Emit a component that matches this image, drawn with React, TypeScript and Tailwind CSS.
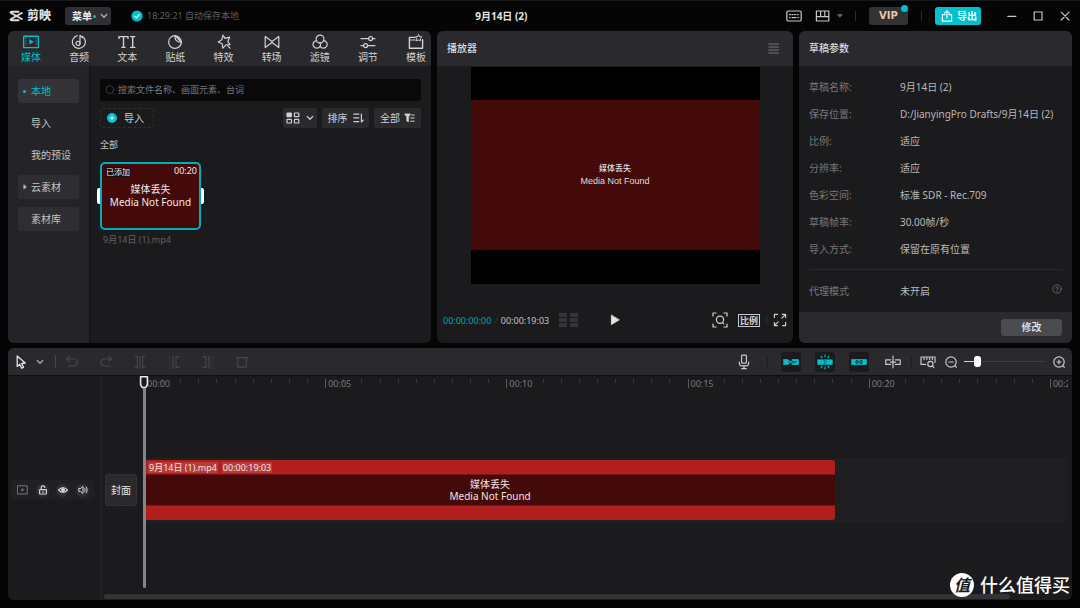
import React, { useState } from 'react';

type IconProps = {
  w?: number;
  h?: number;
  className?: string;
  children: React.ReactNode;
};

function Icon({ w = 16, h = 16, className = '', children }: IconProps) {
  return (
    <svg
      width={w}
      height={h}
      viewBox={`0 0 ${w} ${h}`}
      fill="none"
      stroke="currentColor"
      strokeWidth="1.2"
      strokeLinecap="round"
      strokeLinejoin="round"
      aria-hidden="true"
      className={`shrink-0 ${className}`}
    >
      {children}
    </svg>
  );
}

const tabs: { label: string; icon: React.ReactNode }[] = [
  {
    label: '媒体',
    icon: (
      <Icon>
        <rect x="0.6" y="2.2" width="14.8" height="11.4" rx="0.6" strokeWidth="1.4" />
        <path d="M2.9 4v8M13.1 4v8" strokeWidth="0.8" strokeDasharray="0.8 2" />
        <path d="M6.6 5.8v4.2l3.6-2.1z" fill="currentColor" strokeWidth="0.6" />
      </Icon>
    ),
  },
  {
    label: '音频',
    icon: (
      <Icon>
        <path d="M6.3 1.6A6.5 6.5 0 1 0 11 2.2" />
        <circle cx="7" cy="9.4" r="2" />
        <path d="M9 9.4V1.4l2.8 2.4" />
      </Icon>
    ),
  },
  {
    label: '文本',
    icon: (
      <Icon w={18}>
        <path d="M1 4.4V2.6h9v1.8M5.5 2.6v10.8M4 13.4h3" strokeWidth="1.4" />
        <path d="M12.6 2.6h4.2M14.7 2.6v10.8M12.6 13.4h4.2" strokeWidth="1.4" />
      </Icon>
    ),
  },
  {
    label: '贴纸',
    icon: (
      <Icon>
        <path d="M8.2 1.6a6.4 6.4 0 1 0 6.2 6.8z" />
        <path d="M8.2 1.6c-.6 4 1 6.6 6.2 6.8a7 7 0 0 0-6.2-6.8z" />
        <path d="M10 3.2l3 3.2" />
      </Icon>
    ),
  },
  {
    label: '特效',
    icon: (
      <Icon>
        <path d="M7 1.2l2 3.2 4.6-1.2-1.8 4.2 2.2 3.2-4 .2-3.2 3.4-.6-4.4-4-1.8 3.6-2.2z" />
        <path d="M11.8 11.8l2.2 2.4" />
      </Icon>
    ),
  },
  {
    label: '转场',
    icon: (
      <Icon>
        <path d="M1.2 2.4v11.2L8 8.6 14.8 13.6V2.4L8 7.4z" />
      </Icon>
    ),
  },
  {
    label: '滤镜',
    icon: (
      <Icon>
        <circle cx="8" cy="5" r="3.9" />
        <path d="M4.6 6.6a3.8 3.8 0 1 0 3.5 5.8c.5-1 .5-2.4-.2-3.5" />
        <path d="M11.4 6.6a3.8 3.8 0 1 1-3.3 5.8" />
      </Icon>
    ),
  },
  {
    label: '调节',
    icon: (
      <Icon>
        <path d="M1 4.6h7.6M12.6 4.6H15M1 11.6h2.6M7.6 11.6H15" />
        <circle cx="10.6" cy="4.6" r="2" />
        <circle cx="5.6" cy="11.6" r="2" />
      </Icon>
    ),
  },
  {
    label: '模板',
    icon: (
      <Icon>
        <path d="M6.6 3.4H1.4v10.8h13.2V5.8" strokeWidth="1.4" />
        <path d="M1.4 6h6" />
        <path d="M10.6.8l1 1.8 2.2.2-1.4 1.8.4 2.2-2.2-.8-2.2.8.4-2.2-1.4-1.8 2.2-.2z" strokeWidth="1" />
      </Icon>
    ),
  },
];

const sideItems = [
  { label: '本地', style: 'bg-[#333338] text-[#00c1cd]', mark: 'dot' },
  { label: '导入', style: 'text-[#c4c4c6]', mark: '' },
  { label: '我的预设', style: 'text-[#c4c4c6]', mark: '' },
  { label: '云素材', style: 'bg-[#2e2e32] text-[#c4c4c6]', mark: 'arrow' },
  { label: '素材库', style: 'bg-[#2e2e32] text-[#c4c4c6]', mark: '' },
];

const params = [
  ['草稿名称:', '9月14日 (2)'],
  ['保存位置:', 'D:/JianyingPro Drafts/9月14日 (2)'],
  ['比例:', '适应'],
  ['分辨率:', '适应'],
  ['色彩空间:', '标准 SDR - Rec.709'],
  ['草稿帧率:', '30.00帧/秒'],
  ['导入方式:', '保留在原有位置'],
];

const marks = ['00:00', '00:05', '00:10', '00:15', '00:20'];

function Chevron({ className = '' }: { className?: string }) {
  return (
    <Icon w={8} h={6} className={className}>
      <path d="M1.2 1.4L4 4.2l2.8-2.8" strokeWidth="1.3" />
    </Icon>
  );
}

function TitleBar() {
  return (
    <header className="grid h-[30px] grid-cols-[43fr_auto_50fr] items-center">
      <div className="flex min-w-0 items-center pl-[9px]">
        <Icon w={14} h={12} className="text-[#dedede]">
          <path d="M9.6 1.8H2.8Q1 1.8 2 3L12.8 9" strokeWidth="1.9" />
          <path d="M9.6 10.2H2.8Q1 10.2 2 9L12.8 3" strokeWidth="1.9" />
        </Icon>
        <span className="ml-1 text-[12px] leading-4 font-black text-[#dedede]">剪映</span>
        <button className="ml-[14px] flex h-[18px] w-[46px] items-center rounded-[3px] bg-[#2f2f34] pl-[7px] text-[10px] font-bold text-[#ececec]">
          菜单
          <span className="ml-px size-[3px] rounded-full bg-[#00c1cd]" />
          <Chevron className="ml-1 text-[#b8b8ba]" />
        </button>
        <Icon w={12} h={12} className="ml-5 text-white">
          <circle cx="6" cy="6" r="5.6" fill="#00c1cd" stroke="none" />
          <path d="M3.6 6.1l1.8 1.7 3-3.4" />
        </Icon>
        <span className="ml-1 text-[9px] whitespace-nowrap text-[#5c5c60]">18:29:21 自动保存本地</span>
      </div>

      <h1 className="text-[10px] font-bold whitespace-nowrap text-[#e4e4e4]">9月14日 (2)</h1>

      <div className="flex items-center justify-end pr-[10px] text-[#c8c8ca]">
        <button aria-label="快捷键">
          <Icon w={16} h={12}>
            <rect x="0.8" y="1" width="14.4" height="10" rx="1.6" />
            <path d="M3.6 4.6h1M6 4.6h1M8.6 4.6h1M11.2 4.6h1M3.6 7.6h.6M6 7.6h4M11.8 7.6h.6" />
          </Icon>
        </button>
        <button aria-label="布局" className="ml-[13px] flex items-center gap-1.5">
          <Icon w={16} h={12}>
            <path d="M1.4 1h12.4v10H1.4zM1.4 6.6h12.4M5.6 1v5.6M9.8 1v5.6" />
          </Icon>
          <Icon w={6} h={4} className="text-[#6a6a6e]">
            <path d="M.6.6h4.8L3 3.2z" fill="currentColor" strokeWidth="0.6" />
          </Icon>
        </button>
        <span className="ml-3 h-[10px] w-px bg-[#2c2c30]" />
        <button className="relative ml-[13px] h-[18px] w-[39px] rounded-[3px] bg-[#323237] font-['DejaVu_Sans',sans-serif] text-[10px] leading-[18px] font-bold text-[#edc6a4]">
          VIP
          <span className="absolute -top-0.5 right-0 size-[7px] rounded-full bg-[#00c1cd]" />
        </button>
        <span className="ml-[13px] h-[10px] w-px bg-[#2c2c30]" />
        <button className="ml-[13px] flex h-[18px] w-[46px] items-center gap-1 rounded-[3px] bg-[#00c1cd] pl-1.5 text-[10px] font-bold text-white">
          <Icon w={12} h={12}>
            <path d="M4 4.6H1.4v6.6h9.2V4.6H8M6 8V1.2M3.8 3L6 1l2.2 2" />
          </Icon>
          导出
        </button>
        <button aria-label="最小化" className="ml-[26px]">
          <Icon w={10} h={10}>
            <path d="M.8 5.4h8" />
          </Icon>
        </button>
        <button aria-label="最大化" className="ml-4">
          <Icon w={10} h={10}>
            <path d="M1.2 1h7.8v8H1.2z" />
          </Icon>
        </button>
        <button aria-label="关闭" className="ml-[17px]">
          <Icon w={10} h={10}>
            <path d="M1.2 1.2l7.8 7.8M9 1.2L1.2 9" />
          </Icon>
        </button>
      </div>
    </header>
  );
}

function MediaPanel() {
  return (
    <section className="flex min-w-0 flex-col overflow-hidden rounded-md bg-[#1b1b1d]">
      <nav className="flex h-[35px] justify-between bg-[#29292e] pr-[3px] pl-[11px]">
        {tabs.map((t, i) => (
          <button
            key={t.label}
            className={`flex w-6 flex-col items-center pt-[3px] text-[10px] leading-[14px] whitespace-nowrap ${
              i === 0 ? 'text-[#00c1cd]' : 'text-[#d2d2d4]'
            }`}
          >
            {t.icon}
            {t.label}
          </button>
        ))}
      </nav>
      <div className="flex flex-1">
        <aside className="flex w-[82px] flex-col gap-2 border-r border-[#141416] bg-[#242428] px-[10px] pt-[13px]">
          {sideItems.map((s) => (
            <button
              key={s.label}
              className={`flex h-6 items-center rounded-[3px] text-[10px] whitespace-nowrap ${s.style}`}
            >
              <span className="flex w-[13px] shrink-0 items-center justify-center">
                {s.mark === 'dot' && <span className="size-[3px] rounded-full bg-[#00c1cd]" />}
                {s.mark === 'arrow' && (
                  <Icon w={4} h={6}>
                    <path d="M.8 1v4l2.4-2z" fill="currentColor" strokeWidth="0.6" />
                  </Icon>
                )}
              </span>
              {s.label}
            </button>
          ))}
        </aside>
        <div className="min-w-0 flex-1 pt-[13px] pr-[10px] pl-[10px]">
          <label className="flex h-[22px] items-center gap-[3px] rounded-[3px] bg-[#09090a] pl-[5px]">
            <Icon w={10} h={10} className="text-[#3e3e42]">
              <circle cx="4.8" cy="4.6" r="3.8" strokeWidth="1" />
              <path d="M7.6 7.6l1.4 1.4" strokeWidth="1" />
            </Icon>
            <input
              type="text"
              aria-label="搜索"
              placeholder="搜索文件名称、画面元素、台词"
              className="min-w-0 flex-1 bg-transparent text-[9px] outline-none placeholder:text-[#77777b]"
            />
          </label>
          <div className="mt-[7px] flex h-5 items-center gap-[5px] text-[10px] text-[#d0d0d2]">
            <button className="mr-auto flex h-5 w-[54px] items-center rounded-[3px] border border-dashed border-[#2f2f32] pl-1.5">
              <Icon w={10} h={10} className="mr-[7px] text-white">
                <circle cx="5" cy="5" r="5" fill="#00c1cd" stroke="none" />
                <path d="M5 3v4M3 5h4" strokeWidth="1" />
              </Icon>
              导入
            </button>
            <button
              aria-label="视图"
              className="flex h-5 w-[34px] items-center justify-center gap-1.5 rounded-[3px] bg-[#2a2a2d]"
            >
              <Icon w={14} h={12}>
                <rect x="1" y="1" width="4.4" height="3.6" rx="0.6" fill="currentColor" />
                <rect x="8.4" y="1" width="4.4" height="3.6" rx="0.6" />
                <rect x="1" y="7.4" width="4.4" height="3.6" rx="0.6" />
                <rect x="8.4" y="7.4" width="4.4" height="3.6" rx="0.6" />
              </Icon>
              <Chevron />
            </button>
            <button className="flex h-5 w-[47px] items-center justify-center gap-[5px] rounded-[3px] bg-[#2a2a2d]">
              排序
              <Icon w={11} h={10}>
                <path d="M.8 1.2h5M.8 4.8h5M.8 8.6h5M8.4 1v8l1.8-1.8" />
              </Icon>
            </button>
            <button className="flex h-5 w-[47px] items-center justify-center gap-1 rounded-[3px] bg-[#2a2a2d]">
              全部
              <Icon w={11} h={10}>
                <path d="M.8 1h5.6L4.4 4v4.8L2.8 8V4z" fill="currentColor" strokeWidth="0.8" />
                <path d="M7.6 2h2.6M6.6 5h3.6M6.6 8.2h3.6" strokeWidth="1" />
              </Icon>
            </button>
          </div>
          <p className="mt-[10px] text-[9px] leading-[14px] text-[#c4c4c6]">全部</p>
          <figure className="mt-[10px] w-[101px]">
            <div className="relative flex h-[68px] flex-col items-center justify-center rounded-[5px] border-2 border-[#00adb9] bg-[#440a0a] text-[10px] leading-[13px] text-[#ececec]">
              <span className="absolute top-[3px] left-[3px] rounded-[2px] bg-[#1c0c0c] px-px text-[8px] leading-[10px]">
                已添加
              </span>
              <span className="absolute top-px right-0.5 text-[9px] leading-3">00:20</span>
              <span className="absolute top-6 -left-[5px] h-4 w-[3px] rounded-l-[2px] bg-white" />
              <span className="absolute top-6 -right-[5px] h-4 w-[3px] rounded-r-[2px] bg-white" />
              <span>媒体丢失</span>
              <span className="whitespace-nowrap">Media Not Found</span>
            </div>
            <figcaption className="mt-1 pl-[3px] text-[9px] leading-3 text-[#606064]">9月14日 (1).mp4</figcaption>
          </figure>
        </div>
      </div>
    </section>
  );
}

function PlayerPanel() {
  return (
    <section className="flex min-w-0 flex-col overflow-hidden rounded-md bg-[#1b1b1d]">
      <header className="flex h-[35px] items-center justify-between bg-[#29292e] pr-[14px] pl-[10px]">
        <h2 className="text-[10px] font-medium text-[#dcdcde]">播放器</h2>
        <button aria-label="播放器菜单" className="text-[#77777b]">
          <Icon w={11} h={11}>
            <path d="M.8 1h9.6M.8 4h9.6M.8 7h9.6M.8 10h9.6" strokeWidth="1" />
          </Icon>
        </button>
      </header>
      <div className="mx-auto mt-px flex aspect-[4/3] w-[289px] max-w-full flex-col justify-center bg-black">
        <div className="flex h-[150px] flex-col items-center justify-center bg-[#440a0a] font-['Liberation_Sans','Noto_Sans_CJK_SC',sans-serif] text-[9px] leading-[12px] font-medium text-[#dedede]">
          <span className="text-[8px]">媒体丢失</span>
          <span>Media Not Found</span>
        </div>
      </div>
      <div className="grid flex-1 grid-cols-[1fr_auto_1fr] items-center px-1.5 pt-[14px]">
        <div className="flex items-center text-[9px] whitespace-nowrap">
          <span className="text-[#00a5b0]">00:00:00:00</span>
          <span className="mx-[3px] text-[#333337]">/</span>
          <span className="text-[#c4c4c6]">00:00:19:03</span>
          <span className="ml-[10px] grid grid-cols-2 gap-x-[3px] gap-y-px">
            {Array.from({ length: 6 }, (_, i) => (
              <span key={i} className="h-1 w-2 bg-[#353538]" />
            ))}
          </span>
        </div>
        <button aria-label="播放" className="text-[#e4e4e6]">
          <Icon w={10} h={12}>
            <path d="M1.4 1.4v9.2L9 6z" fill="currentColor" strokeWidth="0.8" />
          </Icon>
        </button>
        <div className="flex items-center justify-end text-[#d0d0d2]">
          <button aria-label="缩放适应">
            <Icon>
              <path d="M1 4V1h3M12 1h3v3M15 12v3h-3M4 15H1v-3" />
              <circle cx="8" cy="7.8" r="3.6" />
              <path d="M10.6 10.6l1.2 1.2" />
            </Icon>
          </button>
          <button className="ml-[10px] h-[13px] w-[22px] border border-[#c8c8ca] text-[9px] leading-[11px] font-bold">
            比例
          </button>
          <span className="ml-[6px] h-[10px] w-px bg-[#2c2c30]" />
          <button aria-label="全屏" className="ml-[6px]">
            <Icon w={14} h={14}>
              <path d="M1.4 4.4V1.4h3.2M9.4 1.4h3.2v3.2M12.6 9.6v3H9.6M4.4 12.6h-3V9.6M8.8 5.2l3.4-3.4M5.2 8.8l-3.4 3.4" />
            </Icon>
          </button>
        </div>
      </div>
    </section>
  );
}

function ParamsPanel() {
  return (
    <section className="flex min-w-0 flex-col overflow-hidden rounded-md bg-[#1b1b1d] text-[10px]">
      <header className="flex h-[35px] items-center bg-[#29292e] px-[10px]">
        <h2 className="font-medium text-[#dcdcde]">草稿参数</h2>
      </header>
      <dl className="mx-[10px] border-b border-[#2a2a2d] pt-2 pb-[6px]">
        {params.map(([k, v]) => (
          <div key={k} className="flex h-[27px] items-center">
            <dt className="w-[91px] shrink-0 text-[#77777b]">{k}</dt>
            <dd className="whitespace-nowrap text-[#b8b8ba]">{v}</dd>
          </div>
        ))}
      </dl>
      <div className="mx-[10px] flex flex-1 items-center">
        <dl className="flex">
          <dt className="w-[91px] text-[#77777b]">代理模式</dt>
          <dd className="text-[#b8b8ba]">未开启</dd>
        </dl>
        <button aria-label="帮助" className="mb-1 ml-auto text-[#66666a]">
          <Icon w={10} h={10}>
            <circle cx="5" cy="5" r="4.2" strokeWidth="0.9" />
            <path d="M3.8 4a1.2 1.2 0 1 1 1.2 1.4v.6M5 7.4v.1" strokeWidth="0.9" />
          </Icon>
        </button>
      </div>
      <footer className="flex h-[31px] items-center justify-end bg-[#29292e] pr-[10px]">
        <button className="h-[17px] w-[61px] rounded-[3px] bg-[#4b4b50] text-[10px] leading-[17px] font-medium text-[#ececec]">
          修改
        </button>
      </footer>
    </section>
  );
}

const editTools: { label: string; icon: React.ReactNode }[] = [
  { label: '撤销', icon: <path d="M2 4h6.6a3.4 3.4 0 0 1 0 7H3M4.4 1.4L1.6 4l2.8 2.4" /> },
  { label: '重做', icon: <path d="M12 4H5.4a3.4 3.4 0 0 0 0 7H11M9.6 1.4L12.4 4 9.6 6.4" /> },
  { label: '分割', icon: <path d="M2.4 1.6h2v10.8h-2M11.6 1.6h-2v10.8h2M7 1v12" /> },
  { label: '向左裁剪', icon: <path d="M12 1.6H9v10.8h3M6 1v12M2.6 2v.1M2.6 5v.1M2.6 8v.1M2.6 11v.1" /> },
  { label: '向右裁剪', icon: <path d="M2 1.6h3v10.8H2M8 1v12M11.4 2v.1M11.4 5v.1M11.4 8v.1M11.4 11v.1" /> },
  { label: '删除', icon: <path d="M1.4 2.6h11.2M2.8 2.6v9.6h8.4V2.6" /> },
];

const snapTools: { label: string; icon: React.ReactNode }[] = [
  {
    label: '主轨磁吸',
    icon: (
      <>
        <path d="M.6 5.6h4.4v4.8H.6zM9.4 5.6h6v4.8h-6z" fill="currentColor" strokeWidth="0.8" />
        <path d="M5.4 6.6L7.4 8l-2 1.4M7.4 8h2" strokeWidth="1.2" />
        <path d="M9.6 8h3.2" stroke="#1b1b1e" strokeWidth="1" />
      </>
    ),
  },
  {
    label: '自动吸附',
    icon: (
      <>
        <path d="M.6 5.8h6.2v4.6H.6zM9.2 5.8h6.2v4.6H9.2z" fill="currentColor" strokeWidth="0.6" />
        <path d="M8 5.6v5M8 1.2v1.4M8 13.4v1.4M4.2 2.2l.8 1.4M11.8 2.2L11 3.6M4.2 13.8l.8-1.4M11.8 13.8l-.8-1.4" />
      </>
    ),
  },
  {
    label: '联动',
    icon: (
      <>
        <path d="M.6 5.6h14.8v4.8H.6z" fill="currentColor" strokeWidth="0.8" />
        <path d="M6.8 6.8H5v2.4h1.8M9.2 6.8H11v2.4H9.2M7 8h2" stroke="#1b1b1e" strokeWidth="0.9" />
      </>
    ),
  },
];

function TimelineToolbar() {
  const [zoom, setZoom] = useState(13);
  return (
    <div className="flex h-7 items-center justify-between border-b border-[#101012] bg-[#29292e]">
      <div className="flex items-center pl-[7px]">
        <button aria-label="选择" className="text-[#e4e4e6]">
          <Icon w={14} h={14}>
            <path d="M2.2 1v10.4l2.6-2.2 1.8 4 1.9-.9-1.8-3.8 3.5-.5z" strokeWidth="1.3" />
          </Icon>
        </button>
        <button aria-label="工具列表" className="ml-[7px] text-[#b0b0b2]">
          <Chevron />
        </button>
        <span className="ml-[11px] h-[13px] w-px bg-[#47474b]" />
        <div className="ml-[9px] flex gap-5 text-[#47474b]">
          {editTools.map((t) => (
            <button key={t.label} aria-label={t.label}>
              <Icon w={14} h={14}>
                {t.icon}
              </Icon>
            </button>
          ))}
        </div>
      </div>
      <div className="flex items-center pr-1.5 text-[#c8c8ca]">
        <button aria-label="录音">
          <Icon w={14} h={16}>
            <rect x="4.6" y="1.2" width="4.8" height="8" rx="1" />
            <path d="M2.4 8v1.6q0 2.2 2.2 2.2h4.8q2.2 0 2.2-2.2V8M7 11.8v2.8M4.6 14.6h4.8" />
          </Icon>
        </button>
        <span className="mr-[13px] ml-4 h-[10px] w-px bg-[#1e1e21]" />
        <div className="flex gap-[14px]">
          {snapTools.map((t) => (
            <button
              key={t.label}
              aria-label={t.label}
              className="flex size-5 items-center justify-center rounded-[3px] bg-[#1b1b1e] text-[#00c1cd]"
            >
              <Icon>{t.icon}</Icon>
            </button>
          ))}
          <button aria-label="预览轴" className="flex size-5 items-center justify-center">
            <Icon>
              <path d="M8 2.2v11.6M5.6 5.8H.8v4.6h4.8M10.4 5.8h4.8v4.6h-4.8M5.4 8.1h5.2" />
            </Icon>
          </button>
        </div>
        <span className="mx-2 h-[10px] w-px bg-[#1e1e21]" />
        <button aria-label="时间轴缩放">
          <Icon w={16} h={14}>
            <path d="M5.6 9.4H1V2h14v5.4M4 2.2v2.4M6.8 2.2v2.4M9.6 2.2v2.4M12.4 2.2v2.4" />
            <circle cx="10.4" cy="9" r="2.6" />
            <path d="M12.4 11l1.6 1.6" />
          </Icon>
        </button>
        <button aria-label="缩小" className="ml-2">
          <Icon w={14} h={14}>
            <circle cx="7" cy="7" r="5.2" />
            <path d="M4.8 7h4.4M10.8 10.8l1.6 1.4" />
          </Icon>
        </button>
        <input
          type="range"
          aria-label="缩放"
          min={0}
          max={100}
          value={zoom}
          onChange={(e) => setZoom(Number(e.target.value))}
          className="mx-[6px] h-3 w-[82px] appearance-none bg-[linear-gradient(to_right,#d4d4d6_18%,#3c3c40_18%)] bg-[length:100%_1px] bg-center bg-no-repeat [&::-webkit-slider-thumb]:h-[11px] [&::-webkit-slider-thumb]:w-[7px] [&::-webkit-slider-thumb]:appearance-none [&::-webkit-slider-thumb]:rounded-[3px] [&::-webkit-slider-thumb]:bg-white"
        />
        <button aria-label="放大">
          <Icon w={14} h={14}>
            <circle cx="7" cy="7" r="5.2" />
            <path d="M5 7h4M7 5v4M10.8 10.8l1.6 1.4" />
          </Icon>
        </button>
      </div>
    </div>
  );
}

function Ruler() {
  return (
    <div className="grid h-4 grid-cols-[repeat(5,minmax(0,10fr))_minmax(0,1fr)] overflow-hidden text-[9px] leading-[15px] text-[#77777b]">
      {marks.map((m) => (
        <div key={m} className="relative grid grid-cols-10">
          {Array.from({ length: 10 }, (_, i) => (
            <span
              key={i}
              className={i === 0 ? 'mt-[3px] h-[9px] border-l border-[#5a5a5e]' : 'mt-[3px] h-1 border-l border-[#38383b]'}
            />
          ))}
          <span className="absolute top-0 left-[3px]">{m}</span>
        </div>
      ))}
      <div className="flex overflow-hidden">
        <span className="mt-[3px] h-[9px] border-l border-[#5a5a5e]" />
        <span className="ml-0.5">00:25</span>
      </div>
    </div>
  );
}

const trackControls: { label: string; icon: React.ReactNode }[] = [
  {
    label: '锁定',
    icon: (
      <>
        <rect x="1.6" y="4.6" width="6.8" height="4.4" rx="0.4" />
        <path d="M3.2 4.4V2.8a1.8 1.8 0 0 1 3.6-.4M5 6.4v.8" />
      </>
    ),
  },
  {
    label: '显示',
    icon: (
      <>
        <path d="M.6 5Q5 .2 9.4 5 5 9.8.6 5z" />
        <circle cx="5" cy="5" r="1.4" fill="currentColor" />
      </>
    ),
  },
  {
    label: '静音',
    icon: <path d="M.8 3.6v2.8h1.6L5 8.6V1.4L2.4 3.6zM6.8 3.6q.8 1.4 0 2.8M8.4 2.2q1.8 2.8 0 5.6" strokeWidth="1" />,
  },
];

function Timeline() {
  return (
    <section className="flex flex-1 flex-col overflow-hidden rounded-md bg-[#1b1b1d]">
      <TimelineToolbar />
      <div className="flex flex-1">
        <div className="w-[94px] shrink-0 border-r border-[#252528] pt-[104px] pl-[3px]">
          <div className="flex h-5 w-[84px] items-center gap-[7px] rounded-[4px] bg-[#202023] pl-[6px] text-[#d0d0d2]">
            <Icon w={11} h={10} className="mr-px text-[#77777b]">
              <rect x="0.8" y="0.8" width="9.4" height="8.2" strokeWidth="1" />
              <path d="M4.6 3.6v2.8L7 5z" fill="currentColor" strokeWidth="0.4" />
            </Icon>
            {trackControls.map((c) => (
              <button
                key={c.label}
                aria-label={c.label}
                className="flex size-[13px] items-center justify-center rounded-full bg-[#2f2f33]"
              >
                <Icon w={10} h={10}>
                  {c.icon}
                </Icon>
              </button>
            ))}
          </div>
        </div>
        <div className="flex min-w-0 flex-1 flex-col">
          <div className="flex flex-1">
            <div className="w-[42px] shrink-0 pt-[98px] pl-[3px]">
              <button className="size-8 rounded-[3px] border border-dashed border-[#38383b] bg-[#2a2a2d] text-[10px] text-[#e4e4e6]">
                封面
              </button>
            </div>
            <div className="relative mr-1 min-w-0 flex-1">
              <Ruler />
              <div className="mt-[66px] h-16 bg-[#1f1f21] py-0.5">
                <div className="ml-px flex h-[60px] w-[74.7%] flex-col rounded-[3px] bg-[#b01e1e] text-[#f0e4e4]">
                  <div className="flex h-[14px] items-center gap-1 pl-[3px] text-[9px] leading-[11px]">
                    <span className="bg-[#b93a3a] px-px">9月14日 (1).mp4</span>
                    <span className="bg-[#b93a3a] px-px">00:00:19:03</span>
                  </div>
                  <div className="flex h-8 flex-col items-center justify-center border-y border-[#7a1515] bg-[#440a0a] text-[10px] leading-[12px]">
                    <span>媒体丢失</span>
                    <span>Media Not Found</span>
                  </div>
                </div>
              </div>
              <div className="absolute top-0 bottom-1.5 -left-[5px] flex flex-col items-center">
                <Icon w={10} h={13} className="text-[#e8e8ea]">
                  <path d="M1.6.8h6.8v8L6.6 11.6H3.4L1.6 8.8z" fill="#1b1b1d" strokeWidth="1.6" />
                </Icon>
                <span className="w-[3px] flex-1 rounded-b-full bg-[#858588]" />
              </div>
            </div>
          </div>
          <div className="h-1.5 pr-[62px] pl-0.5">
            <div className="h-[5px] rounded-full bg-[#343438]" />
          </div>
        </div>
      </div>
    </section>
  );
}

export default function App() {
  return (
    <main className="relative flex min-h-screen flex-col border-t border-[#17181a] bg-[#050506] font-['Noto_Sans','Noto_Sans_CJK_SC',sans-serif]">
      <TitleBar />
      <div className="flex flex-1 flex-col gap-[5px] px-2 pb-2">
        <div className="grid min-h-[312px] grid-cols-[423fr_356fr_273fr] gap-1.5">
          <MediaPanel />
          <PlayerPanel />
          <ParamsPanel />
        </div>
        <Timeline />
      </div>
      <div className="absolute right-[10px] bottom-[11px] flex items-center gap-[6px] text-white">
        <span className="flex size-6 items-center justify-center rounded-full bg-white text-[16px] leading-6 font-bold text-[#1b1b1d] italic">
          值
        </span>
        <span className="text-[18px] leading-6 font-medium">什么值得买</span>
      </div>
    </main>
  );
}
